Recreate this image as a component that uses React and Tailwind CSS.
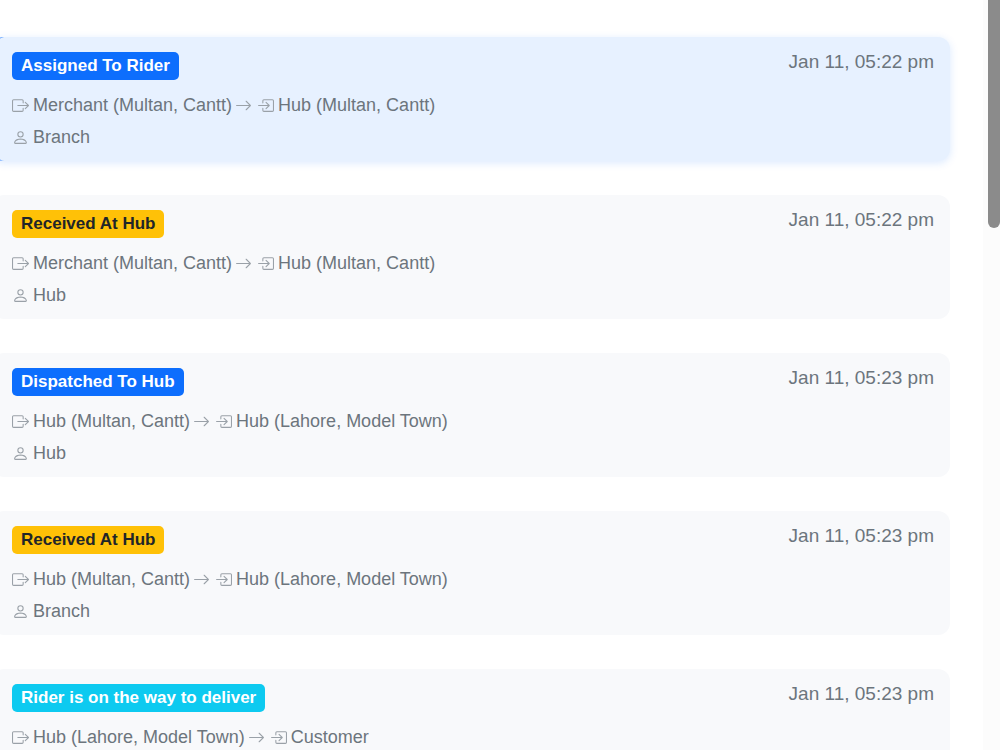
import React from 'react';
import { BsArrowRight, BsBoxArrowInRight, BsBoxArrowRight, BsPerson } from 'react-icons/bs';

const badgeStyles = {
  primary: 'bg-[#0d6efd] text-white',
  warning: 'bg-[#ffc107] text-[#212529]',
  info: 'bg-[#0dcaf0] text-white',
};

const events = [
  { id: 1, status: 'Assigned To Rider', tone: 'primary', from: 'Merchant (Multan, Cantt)', to: 'Hub (Multan, Cantt)', by: 'Branch', time: 'Jan 11, 05:22 pm', active: true },
  { id: 2, status: 'Received At Hub', tone: 'warning', from: 'Merchant (Multan, Cantt)', to: 'Hub (Multan, Cantt)', by: 'Hub', time: 'Jan 11, 05:22 pm' },
  { id: 3, status: 'Dispatched To Hub', tone: 'primary', from: 'Hub (Multan, Cantt)', to: 'Hub (Lahore, Model Town)', by: 'Hub', time: 'Jan 11, 05:23 pm' },
  { id: 4, status: 'Received At Hub', tone: 'warning', from: 'Hub (Multan, Cantt)', to: 'Hub (Lahore, Model Town)', by: 'Branch', time: 'Jan 11, 05:23 pm' },
  { id: 5, status: 'Rider is on the way to deliver', tone: 'info', from: 'Hub (Lahore, Model Town)', to: 'Customer', time: 'Jan 11, 05:23 pm' },
];

function EventCard({ event }) {
  return (
    <li
      className={`flex min-h-[124px] items-start justify-between rounded-xl border-l-4 pt-[15px] pr-4 pb-2 pl-4 ${
        event.active
          ? 'border-[#0d6efd] bg-[#e7f1ff] shadow-[0_2px_8px_rgba(13,110,253,0.15)]'
          : 'border-transparent bg-[#f8f9fb]'
      }`}
    >
      <div>
        <span className={`inline-block h-7 rounded-[5px] px-[9px] align-top text-[17px] leading-7 font-bold ${badgeStyles[event.tone]}`}>
          {event.status}
        </span>
        <div className="mt-[9px] flex h-8 items-center text-[18px]">
          <BsBoxArrowRight className="mr-1 size-[17px] text-[#9aa1a8]" />
          {event.from}
          <BsArrowRight className="mr-[5px] ml-[3px] size-[17px] text-[#9aa1a8]" />
          <BsBoxArrowInRight className="mr-1 size-[17px] text-[#9aa1a8]" />
          {event.to}
        </div>
        {event.by && (
          <div className="flex h-8 items-center text-[18px]">
            <BsPerson className="mr-1 size-[17px] text-[#9aa1a8]" />
            {event.by}
          </div>
        )}
      </div>
      <time className="-mt-1 text-[19px] leading-7">{event.time}</time>
    </li>
  );
}

export default function TrackingHistory() {
  return (
    <div className="flex h-screen overflow-hidden bg-white font-['Liberation_Sans',Arial,sans-serif] text-[#6c757d]">
      {/* Timeline */}
      <main className="flex-1 pt-[37px] pr-[33px]">
        <ul className="-ml-2 flex flex-col gap-[34px]">
          {events.map((event) => (
            <EventCard key={event.id} event={event} />
          ))}
        </ul>
      </main>

      {/* Scrollbar */}
      <div className="w-[17px] bg-[#fcfcfc] pl-[5px]">
        <div className="h-[228px] rounded-b-full bg-[#8b8b8b]" />
      </div>
    </div>
  );
}
